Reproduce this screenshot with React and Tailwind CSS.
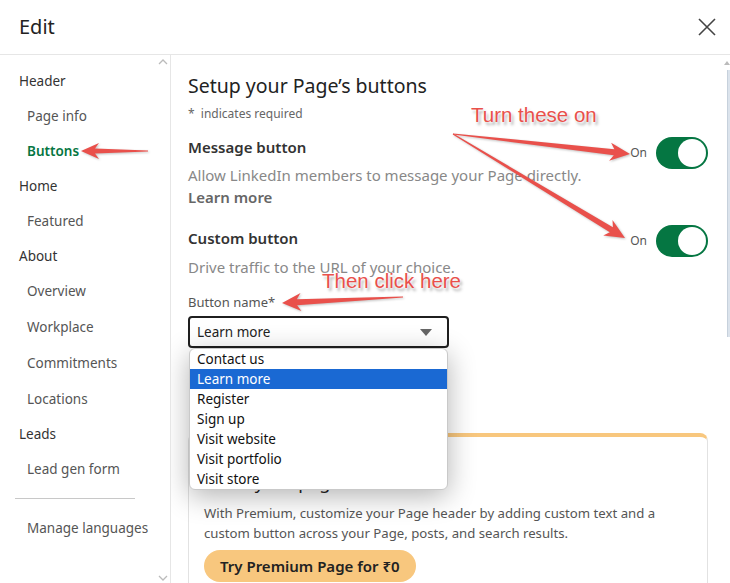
import React from 'react';

const navItems = [
  { label: 'Header', kind: 'head', h: 'h-[35px]' },
  { label: 'Page info', kind: 'sub', h: 'h-[35px]' },
  { label: 'Buttons', kind: 'active', h: 'h-[35px]' },
  { label: 'Home', kind: 'head', h: 'h-[35px]' },
  { label: 'Featured', kind: 'sub', h: 'h-[35px]' },
  { label: 'About', kind: 'head', h: 'h-[35px]' },
  { label: 'Overview', kind: 'sub', h: 'h-[35px]' },
  { label: 'Workplace', kind: 'sub', h: 'h-[36px]' },
  { label: 'Commitments', kind: 'sub', h: 'h-[36px]' },
  { label: 'Locations', kind: 'sub', h: 'h-[36px]' },
  { label: 'Leads', kind: 'head', h: 'h-[35px]' },
  { label: 'Lead gen form', kind: 'sub', h: 'h-[35px]' },
];

const options = ['Contact us', 'Learn more', 'Register', 'Sign up', 'Visit website', 'Visit portfolio', 'Visit store'];

// tapered annotation arrow, thin at the tail and barbed at the tip
const arrowPoints = (tx, ty, hx, hy, headLen = 16, headW = 17, shaftW = 6) => {
  const dx = hx - tx;
  const dy = hy - ty;
  const len = Math.hypot(dx, dy);
  const ux = dx / len;
  const uy = dy / len;
  const nx = -uy;
  const ny = ux;
  const bx = hx - ux * headLen;
  const by = hy - uy * headLen;
  const wx = hx - ux * (headLen + 4);
  const wy = hy - uy * (headLen + 4);
  const pts = [
    [tx + nx * 0.6, ty + ny * 0.6],
    [bx + (nx * shaftW) / 2, by + (ny * shaftW) / 2],
    [wx + (nx * headW) / 2, wy + (ny * headW) / 2],
    [hx, hy],
    [wx - (nx * headW) / 2, wy - (ny * headW) / 2],
    [bx - (nx * shaftW) / 2, by - (ny * shaftW) / 2],
    [tx - nx * 0.6, ty - ny * 0.6],
  ];
  return pts.map((p) => p.map((v) => v.toFixed(1)).join(',')).join(' ');
};

const Toggle = ({ className }) => (
  <div className={`flex items-center gap-[9px] ${className}`}>
    <span className="text-[12px] text-[#555]">On</span>
    <div className="w-[52px] h-[32px] rounded-full bg-[#057642] flex items-center justify-end pr-[2px]">
      <div className="w-[28px] h-[28px] rounded-full bg-white" />
    </div>
  </div>
);

const App = () => {
  return (
    <div className="relative w-[730px] h-[583px] overflow-hidden bg-white font-['Segoe_UI','Noto_Sans',sans-serif] text-[#222]">
      <div className="h-[55px] flex items-center justify-between pl-[19px] pr-[13px] border-b border-[#e6e6e6]">
        <h1 className="text-[20px] text-[#222]">Edit</h1>
        <svg width="20" height="20" viewBox="0 0 20 20" className="text-[#444]">
          <path d="M2 2 L18 18 M18 2 L2 18" stroke="currentColor" strokeWidth="1.6" fill="none" />
        </svg>
      </div>

      <div className="flex h-[528px]">
        <aside className="relative w-[171px] shrink-0 border-r border-[#e6e6e6] pt-[9px]">
          <svg width="10" height="6" viewBox="0 0 10 6" className="absolute left-[158px] top-[4px]">
            <path d="M1 5 L5 1 L9 5" stroke="#bbb" strokeWidth="1.3" fill="none" />
          </svg>
          {navItems.map((item) => (
            <div
              key={item.label}
              className={`${item.h} flex items-center text-[13.5px] ${
                item.kind === 'head'
                  ? 'pl-[19px] text-[#333]'
                  : item.kind === 'active'
                  ? 'pl-[27px] text-[#057642] font-semibold'
                  : 'pl-[27px] text-[#555]'
              }`}
            >
              {item.label}
            </div>
          ))}
          <div className="mt-[11px] ml-[15px] w-[120px] border-t border-[#c8c8c8]" />
          <div className="mt-[12px] h-[35px] flex items-center pl-[27px] text-[13.5px] text-[#555]">Manage languages</div>
          <svg width="10" height="6" viewBox="0 0 10 6" className="absolute left-[158px] bottom-[2px]">
            <path d="M1 1 L5 5 L9 1" stroke="#bbb" strokeWidth="1.3" fill="none" />
          </svg>
        </aside>

        <main className="relative flex-1 pl-[17px] pr-[22px] pt-[17px] overflow-hidden">
          <h2 className="text-[19.5px] leading-[28px] text-[#222]">Setup your Page’s buttons</h2>
          <p className="mt-[6px] text-[12px] leading-[16px] text-[#666]">*&nbsp; indicates required</p>

          <div className="mt-[15px] flex justify-between items-start">
            <div>
              <h3 className="text-[15px] leading-[20px] font-semibold text-[#333]">Message button</h3>
              <p className="mt-[7px] text-[15px] leading-[22px] text-[#888]">Allow LinkedIn members to message your Page directly.</p>
              <p className="text-[15px] leading-[22px] font-semibold text-[#666]">Learn more</p>
            </div>
            <Toggle className="mt-0" />
          </div>

          <div className="mt-[20px] flex justify-between items-start">
            <div>
              <h3 className="text-[15px] leading-[20px] font-semibold text-[#333]">Custom button</h3>
              <p className="mt-[8px] text-[15px] leading-[22px] text-[#888]">Drive traffic to the URL of your choice.</p>
            </div>
            <Toggle className="mt-[-3px]" />
          </div>

          <label className="block mt-[15px] text-[13px] leading-[18px] text-[#555]">Button name*</label>
          <div className="relative mt-[5px] w-[261px]">
            <div className="h-[32px] border-2 border-[#1f1f1f] rounded-[4px] flex items-center justify-between pl-[7px] pr-[15px] text-[13.5px] text-[#222]">
              <span>Learn more</span>
              <svg width="12" height="7" viewBox="0 0 12 7">
                <path d="M0 0 L12 0 L6 7 Z" fill="#666" />
              </svg>
            </div>
            <ul className="absolute left-[1px] top-[32px] w-[259px] bg-white border border-[#c9c9c9] rounded-[6px] overflow-hidden shadow-[0_6px_28px_rgba(0,0,0,0.3)] z-10">
              {options.map((opt) => (
                <li
                  key={opt}
                  className={`h-[20px] flex items-center pl-[7px] text-[13.5px] ${
                    opt === 'Learn more' ? 'bg-[#1a69d3] text-white' : 'text-[#111]'
                  }`}
                >
                  {opt}
                </li>
              ))}
            </ul>
          </div>

          <section className="mt-[85px] border-t-4 border-t-[#f8c77e] border-x border-x-[#e2e2e2] rounded-t-[8px] pl-[15px] pr-[15px] pt-[33px] h-[200px]">
            <h3 className="text-[18px] leading-[24px] text-[#222]">Make your page stand out</h3>
            <p className="mt-[9px] text-[13.2px] leading-[20px] text-[#555]">
              With Premium, customize your Page header by adding custom text and a custom button across your Page, posts, and search results.
            </p>
            <button className="mt-[7px] h-[32px] px-[16px] rounded-full bg-[#f8c77e] text-[15px] font-semibold text-[#222]">
              Try Premium Page for ₹0
            </button>
          </section>
        </main>
      </div>

      <div className="absolute right-0 top-[70px] w-[3px] h-[267px] bg-[#dbe3ec] border-l border-[#c7d1dc]" />
      <svg width="6" height="4" viewBox="0 0 6 4" className="absolute right-0 top-[61px]">
        <path d="M0 4 L3 0 L6 4" fill="#bbb" />
      </svg>

      <svg width="730" height="583" className="absolute inset-0 pointer-events-none drop-shadow-[1px_1px_1px_rgba(0,0,0,0.25)]">
        <polygon points={arrowPoints(148, 151, 81, 151, 14, 16, 5)} fill="#e9504b" />
        <polygon points={arrowPoints(453, 134, 630, 154, 16, 18, 6)} fill="#e9504b" />
        <polygon points={arrowPoints(453, 134, 625, 238, 16, 18, 6)} fill="#e9504b" />
        <polygon points={arrowPoints(403, 297, 282, 303, 15, 18, 6)} fill="#e9504b" />
      </svg>
      <span className="absolute left-[471px] top-[103px] text-[20.5px] leading-[24px] text-[#e9504b] font-['Liberation_Sans',sans-serif] [text-shadow:0_0_2px_#fff,0_0_3px_#fff,2px_3px_3px_rgba(0,0,0,0.35)]">
        Turn these on
      </span>
      <span className="absolute left-[322px] top-[269px] text-[20.5px] leading-[24px] text-[#e9504b] font-['Liberation_Sans',sans-serif] [text-shadow:0_0_2px_#fff,0_0_3px_#fff,2px_3px_3px_rgba(0,0,0,0.35)]">
        Then click here
      </span>
    </div>
  );
};

export default App;
